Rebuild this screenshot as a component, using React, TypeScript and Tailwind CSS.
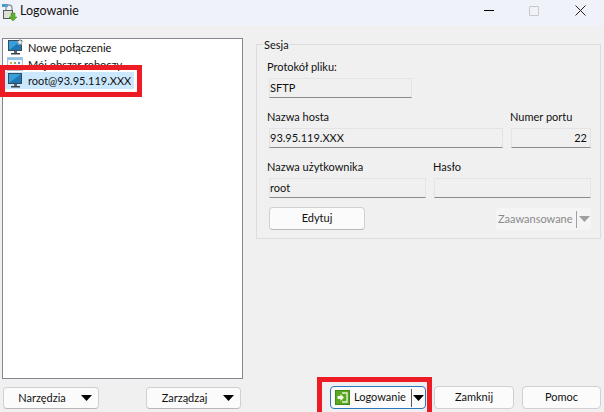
const font = "font-['Lato','Noto_Sans',sans-serif]";

function Monitor({ star }: { star?: boolean }) {
  return (
    <svg width="17" height="17" viewBox="0 0 17 17" className="shrink-0">
      <rect x="1.5" y="1.5" width="13" height="10" fill="#35a0dc" stroke="#3a4a5a" />
      <path d="M2 11 L14 2 V11 Z" fill="#1f78b4" />
      <path d="M7 12 h3 v2 h-3 Z" fill="#5a6570" />
      <path d="M4 14 h9 v1.5 h-9 Z" fill="#3a4048" />
      {star && <path d="M13 0 l1 2 2 .5 -1.5 1.5 .5 2 -2 -1 -2 1 .5 -2 -1.5 -1.5 2 -.5 Z" fill="#e8e8e8" stroke="#8a8a8a" strokeWidth="0.5" />}
    </svg>
  );
}

function Workspace() {
  return (
    <svg width="16" height="14" viewBox="0 0 16 14" className="shrink-0">
      <rect x="0.5" y="0.5" width="15" height="13" fill="#f4f8fb" stroke="#a9c4d8" />
      <rect x="1" y="1" width="14" height="2" fill="#8cc4e8" />
      <rect x="3" y="5" width="2" height="2" fill="#d8b04c" />
      <rect x="7" y="5" width="2" height="2" fill="#7cb05c" />
      <rect x="11" y="5" width="2" height="2" fill="#5c98c8" />
      <rect x="3" y="9" width="2" height="2" fill="#7cb05c" />
      <rect x="7" y="9" width="2" height="2" fill="#d8b04c" />
    </svg>
  );
}

function AppIcon() {
  return (
    <svg width="16" height="18" viewBox="0 0 16 18">
      <rect x="0" y="0" width="6" height="3" fill="#3f9bd8" />
      <path d="M4 6 V4 a3 3 0 0 1 6 0 V6" fill="none" stroke="#8a9aa8" strokeWidth="1.4" />
      <rect x="1.5" y="6.5" width="9" height="8" fill="#e0e0d8" stroke="#55585c" />
      <path d="M9 9 h4 v4 h2 l-4 4 -4 -4 h2 Z" fill="#5cb02c" stroke="#3f8a18" strokeWidth="0.5" />
    </svg>
  );
}

function LoginIcon() {
  return (
    <svg width="15" height="15" viewBox="0 0 15 15" className="shrink-0">
      <rect x="0.5" y="0.5" width="14" height="14" fill="#5aa820" stroke="#3f8a18" />
      <path d="M7 3 h5 v9 h-5" fill="none" stroke="#e8f4d8" strokeWidth="1.3" />
      <path d="M2.5 6 h3 V4 l3.5 3.5 -3.5 3.5 V9 h-3 Z" fill="#f4fae8" />
    </svg>
  );
}

function Caret({ color = "#000", className = "" }: { color?: string; className?: string }) {
  return (
    <svg width="11" height="6" viewBox="0 0 11 6" className={`shrink-0 ${className}`}>
      <path d="M0 0 H11 L5.5 6 Z" fill={color} />
    </svg>
  );
}

function Field({ value, width, right }: { value: string; width: string; right?: boolean }) {
  return (
    <div className={`${width} h-[20px] flex items-center bg-[#f0f0f0] border border-[#e4e4e4] border-b-[#8a8a8a] text-[#111] ${right ? "justify-end pr-[3px]" : ""}`}>
      {value}
    </div>
  );
}

function Btn({ label, width }: { label: string; width: string }) {
  return (
    <div className={`${width} h-[22px] rounded-[4px] border border-[#d0d0d0] border-b-[#b8b8b8] bg-[#fbfbfb] flex items-center justify-center relative text-[#111]`}>
      <span className="mr-[18px]">{label}</span>
      <Caret className="absolute right-[6px] top-[7px]" />
    </div>
  );
}

export default function App() {
  return (
    <div className={`${font} relative w-[604px] h-[412px] overflow-hidden bg-[#f0f0f0] flex flex-col text-[11px] text-[#111]`}>
      <div className="h-[26px] shrink-0 bg-[#f0f2f9] flex items-center pl-[2px]">
        <AppIcon />
        <span className="ml-[2px] text-[12.5px] mb-[4px]">Logowanie</span>
        <div className="ml-auto flex items-center mb-[5px]">
          <div className="w-[10px] h-[1px] bg-black" />
          <div className="ml-[35px] w-[10px] h-[10px] rounded-[1px] border border-[#c8c8c8]" />
          <svg width="11" height="11" viewBox="0 0 11 11" className="ml-[36px] mr-[18px]">
            <path d="M0.5 0.5 L10.5 10.5 M10.5 0.5 L0.5 10.5" stroke="#2a1a1a" strokeWidth="1" />
          </svg>
        </div>
      </div>

      <div className="flex flex-1">
        <div className="w-[241px] ml-[2px] shrink-0 flex flex-col pt-[12px]">
          <div className="h-[341px] bg-white border border-[#828790] pl-[2px] leading-[17px] overflow-hidden">
            <div className="h-[17px] pl-[2px] flex items-center gap-[4px]"><Monitor star /><span>Nowe połączenie</span></div>
            <div className="h-[16px] pl-[2px] flex items-center gap-[5px]"><Workspace /><span>Mój obszar roboczy</span></div>
            <div className="h-[17px] w-[129px] pl-[2px] bg-[#cce8ff] flex items-center gap-[4px]"><Monitor /><span>root@93.95.119.XXX</span></div>
          </div>
          <div className="mt-[8px] ml-[1px] flex w-[238px] justify-between">
            <Btn label="Narzędzia" width="w-[96px]" />
            <Btn label="Zarządzaj" width="w-[95px]" />
          </div>
        </div>

        <div className="flex-1 flex flex-col pl-[13px] pr-[3px]">
          <div className="relative mt-[18px] h-[195px] border border-[#dcdcdc] pl-[12px]">
            <span className="absolute left-[6px] top-[-8px] leading-[15px] bg-[#f0f0f0] px-[1px]">Sesja</span>
            <div className="pt-[14px] leading-[15px] -ml-[2px]">Protokół pliku:</div>
            <div className="mt-[4px]"><Field value="SFTP" width="w-[143px]" /></div>
            <div className="mt-[11px] flex gap-[9px] leading-[15px]">
              <div className="w-[234px] -ml-[2px]">Nazwa hosta</div>
              <div>Numer portu</div>
            </div>
            <div className="mt-[4px] flex gap-[8px]">
              <Field value="93.95.119.XXX" width="w-[234px]" />
              <Field value="22" width="w-[80px]" right />
            </div>
            <div className="mt-[11px] flex leading-[15px]">
              <div className="w-[166px] -ml-[2px]">Nazwa użytkownika</div>
              <div>Hasło</div>
            </div>
            <div className="mt-[4px] flex gap-[8px]">
              <Field value="root" width="w-[157px]" />
              <Field value="" width="w-[157px]" />
            </div>
            <div className="mt-[9px] flex items-start justify-between w-[322px]">
              <div className="w-[96px] h-[23px] rounded-[4px] border border-[#d0d0d0] border-b-[#b8b8b8] bg-[#fbfbfb] flex items-center justify-center">Edytuj</div>
              <div className="w-[95px] h-[22px] mt-[1px] rounded-[4px] bg-[#f5f5f5] flex items-center pl-[2px] text-[#8a8a8a]">
                <span>Zaawansowane</span>
                <div className="ml-auto w-[1px] h-[17px] bg-[#a0a0a0]" />
                <Caret color="#a0a0a0" className="ml-[2px] mr-[1px]" />
              </div>
            </div>
          </div>

          <div className="mt-auto mb-[3px] -ml-[2px] flex gap-[8px] pl-[76px]">
            <div className="w-[96px] h-[23px] rounded-[4px] border border-[#2a78c0] bg-[#fbfbfb] flex items-center pl-[4px]">
              <LoginIcon />
              <span className="ml-[4px]">Logowanie</span>
              <div className="ml-auto w-[1px] h-[18px] bg-[#555]" />
              <Caret className="ml-[1px] mr-[1px]" />
            </div>
            <div className="w-[80px] h-[23px] rounded-[4px] border border-[#d0d0d0] bg-[#fbfbfb] flex items-center justify-center">Zamknij</div>
            <div className="w-[79px] h-[23px] rounded-[4px] border border-[#d0d0d0] bg-[#fbfbfb] flex items-center justify-center">Pomoc</div>
          </div>
        </div>
      </div>

      <div className="absolute left-0 top-[65px] w-[142px] h-[32px] border-[5px] border-[#ed1c24]" />
      <div className="absolute left-[317px] top-[377px] w-[115px] h-[35px] border-[5px] border-b-0 border-[#ed1c24]" />
    </div>
  );
}
